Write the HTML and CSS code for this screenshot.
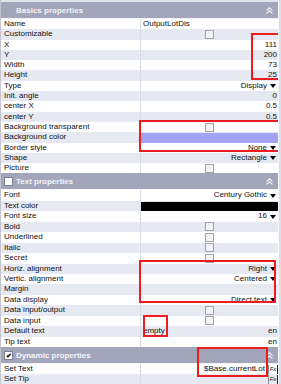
FILE: index.html
```html
<!DOCTYPE html>
<html lang="en">
<head>
  <meta charset="UTF-8">
  <title>Properties</title>
  <link rel="stylesheet" href="styles.css">
</head>
<body>
  <div class="panel">
    <!-- basics -->
    <div class="section-head">
      <span class="head-slot"></span>
      <span class="head-title">Basics properties</span>
      <svg class="collapse" width="7" height="7" viewBox="0 0 7 7"><path d="M0.5 3.5 L3.5 0.8 L6.5 3.5 M0.5 6.5 L3.5 3.8 L6.5 6.5" fill="none" stroke="#eef0f6" stroke-width="1.1"/></svg>
    </div>
    <div class="group basics">
      <div class="row"><div class="label">Name</div><div class="value left">OutputLotDis</div></div>
      <div class="row"><div class="label">Customizable</div><div class="value center"><span class="check"></span></div></div>
      <div class="row"><div class="label">X</div><div class="value">111</div></div>
      <div class="row"><div class="label">Y</div><div class="value">200</div></div>
      <div class="row"><div class="label">Width</div><div class="value">73</div></div>
      <div class="row"><div class="label">Height</div><div class="value">25</div></div>
      <div class="row"><div class="label">Type</div><div class="value">Display<span class="arrow"></span></div></div>
      <div class="row"><div class="label">Init. angle</div><div class="value">0</div></div>
      <div class="row"><div class="label">center X</div><div class="value">0.5</div></div>
      <div class="row"><div class="label">center Y</div><div class="value">0.5</div></div>
      <div class="row"><div class="label">Background transparent</div><div class="value center"><span class="check"></span></div></div>
      <div class="row"><div class="label">Background color</div><div class="value fill"><span class="swatch lavender"></span></div></div>
      <div class="row"><div class="label">Border style</div><div class="value">None<span class="arrow"></span></div></div>
      <div class="row"><div class="label">Shape</div><div class="value">Rectangle<span class="arrow"></span></div></div>
      <div class="row"><div class="label">Picture</div><div class="value center"><span class="check"></span></div></div>
    </div>

    <!-- text -->
    <div class="section-head">
      <span class="head-slot"><span class="head-check"></span></span>
      <span class="head-title">Text properties</span>
      <svg class="collapse" width="7" height="7" viewBox="0 0 7 7"><path d="M0.5 3.5 L3.5 0.8 L6.5 3.5 M0.5 6.5 L3.5 3.8 L6.5 6.5" fill="none" stroke="#eef0f6" stroke-width="1.1"/></svg>
    </div>
    <div class="group text">
      <div class="row"><div class="label">Font</div><div class="value">Century Gothic<span class="arrow"></span></div></div>
      <div class="row"><div class="label">Text color</div><div class="value fill"><span class="swatch black"></span></div></div>
      <div class="row"><div class="label">Font size</div><div class="value">16<span class="arrow"></span></div></div>
      <div class="row"><div class="label">Bold</div><div class="value center"><span class="check"></span></div></div>
      <div class="row"><div class="label">Underlined</div><div class="value center"><span class="check"></span></div></div>
      <div class="row"><div class="label">Italic</div><div class="value center"><span class="check"></span></div></div>
      <div class="row"><div class="label">Secret</div><div class="value center"><span class="check"></span></div></div>
      <div class="row"><div class="label">Horiz. alignment</div><div class="value">Right<span class="arrow"></span></div></div>
      <div class="row"><div class="label">Vertic. alignment</div><div class="value">Centered<span class="arrow"></span></div></div>
      <div class="row"><div class="label">Margin</div><div class="value"></div></div>
      <div class="row"><div class="label">Data display</div><div class="value">Direct text<span class="arrow"></span></div></div>
      <div class="row"><div class="label">Data input/output</div><div class="value center"><span class="check"></span></div></div>
      <div class="row"><div class="label">Data input</div><div class="value center"><span class="check"></span></div></div>
      <div class="row"><div class="label">Default text</div><div class="value split"><span>empty</span><span>en</span></div></div>
      <div class="row"><div class="label">Tip text</div><div class="value">en</div></div>
    </div>

    <!-- dynamic -->
    <div class="section-head">
      <span class="head-slot"><span class="head-check checked">&#10004;</span></span>
      <span class="head-title">Dynamic properties</span>
      <svg class="collapse" width="7" height="7" viewBox="0 0 7 7"><path d="M0.5 3.5 L3.5 0.8 L6.5 3.5 M0.5 6.5 L3.5 3.8 L6.5 6.5" fill="none" stroke="#eef0f6" stroke-width="1.1"/></svg>
    </div>
    <div class="group dynamic">
      <div class="row"><div class="label">Set Text</div><div class="value fx-value">$Base.currentLot<span class="fx">Fx</span></div></div>
      <div class="row"><div class="label">Set Tip</div><div class="value fx-value"><span class="fx">Fx</span></div></div>
    </div>

    <!-- red annotation boxes -->
    <div class="mark m1"></div>
    <div class="mark m2"></div>
    <div class="mark m3"></div>
    <div class="mark m4"></div>
    <div class="mark m5"></div>
  </div>
</body>
</html>
```

FILE: styles.css
```css
body {
  margin: 0;
  background-color: #dcdde6;
  font-family: "Liberation Sans", Arial, sans-serif;
  font-size: 8px;
  color: #111;
  overflow: hidden;
}

.panel {
  position: relative;
  width: 279px;
  height: 384px;
  padding-top: 2px;
  box-sizing: border-box;
  border-left: 1px solid #c2c4d0;
  border-right: 1px solid #fafafa;
  background-color: #e2e3ea;
  overflow: hidden;
}

.section-head {
  display: flex;
  align-items: center;
  height: 16px;
  background-color: #a3a5bb;
  color: #f3f4fa;
  font-weight: bold;
  border-bottom: 1px solid #f4f4f8;
}

.head-slot {
  width: 15px;
  display: flex;
  justify-content: center;
  align-items: center;
}

.head-check {
  width: 7px;
  height: 7px;
  background-color: #fff;
  border: 1px solid #7f8194;
  font-size: 7px;
  line-height: 7px;
  text-align: center;
  color: #000;
}

.head-title {
  flex: 1;
}

.collapse {
  margin-right: 5px;
}

.group {
  background-color: #fff;
}

.row {
  display: flex;
  height: 10.3px;
  line-height: 10.3px;
  background-color: #fff;
}

.text .row {
  height: 10.45px;
  line-height: 10.45px;
}

.row:nth-child(even) {
  background-color: #e6e9f1;
}

.label {
  flex: none;
  width: 136px;
  padding-left: 3px;
  border-right: 1px solid #d9dce6;
  white-space: nowrap;
}

.value {
  flex: 1;
  min-width: 0;
  display: flex;
  justify-content: flex-end;
  align-items: center;
  padding-right: 1px;
  white-space: nowrap;
}

.value.left {
  justify-content: flex-start;
  padding-left: 2px;
}

.value.center {
  justify-content: center;
  padding-right: 0;
}

.value.fill {
  padding: 1px 0 0 0;
  align-items: stretch;
}

.value.split {
  justify-content: space-between;
  padding-left: 2px;
}

.check {
  width: 7px;
  height: 7px;
  border: 1px solid #a2a2a8;
  background-color: #f3f3f5;
}

.swatch {
  flex: 1;
}

.swatch.lavender {
  background-color: #a3a3f6;
}

.swatch.black {
  background-color: #000;
}

.arrow {
  width: 0;
  height: 0;
  margin-left: 3px;
  margin-right: 1px;
  border-left: 3.5px solid transparent;
  border-right: 3.5px solid transparent;
  border-top: 4px solid #000;
}

.fx-value {
  padding-right: 0;
}

.fx {
  flex: none;
  width: 8px;
  height: 9px;
  margin-left: 3px;
  border-left: 1px solid #8a8a90;
  border-right: 1px solid #222;
  font-size: 6px;
  font-style: italic;
  line-height: 9px;
  text-align: center;
}

/* red annotation boxes */
.mark {
  position: absolute;
  box-sizing: border-box;
  border: 2px solid #ee1c1c;
}

.m1 { left: 250px; top: 33px; width: 29px; height: 47px; }
.m2 { left: 138px; top: 120px; width: 141px; height: 32px; }
.m3 { left: 138px; top: 260px; width: 137px; height: 43px; }
.m4 { left: 142px; top: 315px; width: 25px; height: 22px; }
.m5 { left: 196px; top: 347px; width: 71px; height: 30px; }
```
